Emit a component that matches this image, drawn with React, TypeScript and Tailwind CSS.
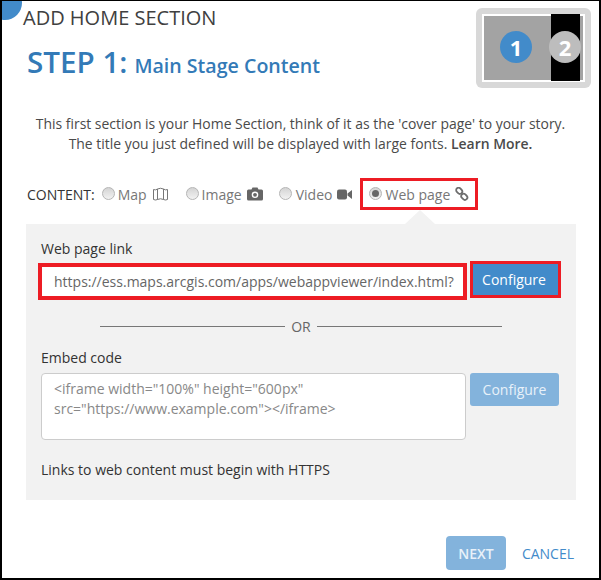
import React from 'react'

const RED = "border-[#ed1c24]"

const Radio = ({ checked }: { checked?: boolean }) => (
  <span className="w-[13px] h-[13px] rounded-full border border-[#b5b5b5] bg-gradient-to-b from-[#d4d4d4] to-[#f2f2f2] flex items-center justify-center shrink-0 -mt-[2px]">
    {checked && <span className="w-[7px] h-[7px] rounded-full bg-[#666]"></span>}
  </span>
)

const MapIcon = () => (
  <svg width="17" height="15" viewBox="0 0 17 15" fill="none" stroke="#777" strokeWidth="1">
    <path d="M1.5 2.5 Q3.5 3.5 5.5 2 Q8.5 0.5 11.5 2 Q13.5 3.5 15.5 2.5 L15.5 12.5 Q13.5 13.5 11.5 12.5 Q8.5 11 5.5 12.5 Q3.5 13.5 1.5 12.5 Z" />
    <path d="M5.5 2 V12.5 M11.5 2 V12.5" />
  </svg>
)

const CameraIcon = () => (
  <svg width="16" height="14" viewBox="0 0 16 14">
    <path fillRule="evenodd" fill="#666" d="M1.5 2.5 H4.5 L5.5 .5 H10.5 L11.5 2.5 H14.5 Q16 2.5 16 4 V12 Q16 13.5 14.5 13.5 H1.5 Q0 13.5 0 12 V4 Q0 2.5 1.5 2.5 Z M8 4.5 A3.3 3.3 0 1 0 8 11.1 A3.3 3.3 0 1 0 8 4.5 Z" />
    <circle cx="8" cy="7.8" r="1.9" fill="#666" />
  </svg>
)

const VideoIcon = () => (
  <svg width="15" height="11" viewBox="0 0 15 11" fill="#666">
    <rect x="0" y="0.5" width="10" height="10" rx="2" />
    <path d="M10.5 4.5 L15 1 V10 L10.5 6.5 Z" />
  </svg>
)

const LinkIcon = () => (
  <svg width="14" height="14" viewBox="0 0 14 14" fill="none" stroke="#6e6e6e" strokeWidth="1.8">
    <rect x="0.9" y="1.4" width="6.6" height="4.8" rx="2.4" transform="rotate(45 4.2 3.8)" />
    <rect x="6" y="7.4" width="6.6" height="4.8" rx="2.4" transform="rotate(45 9.3 9.8)" />
  </svg>
)

const App: React.FC = () => {
  return (
    <div className="relative w-[601px] h-[580px] bg-white overflow-hidden font-['Open_Sans',sans-serif] border-t border-l-2 border-r-2 border-b-2 border-black text-[14px] text-[#333]">
      {/* step badge cut off by the corner */}
      <div className="absolute -left-[14px] -top-[15px] w-[34px] h-[34px] rounded-full bg-[#428bca]"></div>

      <div className="flex justify-between pl-[25px] pr-[8px] pt-[7px] h-[90px]">
        <div>
          <div className="text-[20px] leading-[20px] text-[#404040] -ml-[4px]">ADD HOME SECTION</div>
          <div className="flex items-baseline mt-[14px] text-[#337ab7]">
            <span className="text-[29.6px] leading-[40px] font-semibold mr-[7px]">STEP 1:</span>
            <span className="text-[19.6px] leading-[40px] font-semibold">Main Stage Content</span>
          </div>
        </div>
        <div className="relative w-[115px] h-[80px] bg-[#d8d8d8] rounded-[6px] p-[6px]">
          <div className="relative w-full h-full bg-[#a3a3a3] border-2 border-white">
            <div className="absolute left-[67px] -top-[2px] w-[29px] h-[67px] bg-black"></div>
            <div className="absolute left-[16px] top-[15px] w-[32px] h-[32px] rounded-full bg-[#428bca] text-white font-bold text-[22px] flex items-center justify-center">1</div>
            <div className="absolute left-[65px] top-[15px] w-[32px] h-[32px] rounded-full bg-[#bdbdbd] text-white font-bold text-[22px] flex items-center justify-center">2</div>
          </div>
        </div>
      </div>

      <div className="mt-[23px] text-center text-[13.95px] leading-[20px] text-[#4a4a4a]">
        <p>This first section is your Home Section, think of it as the 'cover page' to your story.</p>
        <p>The title you just defined will be displayed with large fonts. <span className="font-semibold">Learn More.</span></p>
      </div>

      <div className="flex items-center h-[32px] mt-[24px] ml-[25px] text-[#777]">
        <span className="text-[#333] mr-[7px]">CONTENT:</span>
        <span className="flex items-center gap-[3px]"><Radio /><span>Map</span><span className="ml-[2px]"><MapIcon /></span></span>
        <span className="flex items-center gap-[3px] ml-[17px]"><Radio /><span>Image</span><span className="ml-[2px]"><CameraIcon /></span></span>
        <span className="flex items-center gap-[3px] ml-[16px]"><Radio /><span className="ml-[1px]">Video</span><span className="ml-[2px]"><VideoIcon /></span></span>
        <span className={`flex items-center gap-[3px] ml-[8px] h-[32px] pl-[6px] pr-[6px] border-[3px] ${RED}`}><Radio checked /><span>Web page</span><span className="ml-[2px]"><LinkIcon /></span></span>
      </div>

      <div className="relative ml-[24px] mt-[14px] w-[550px] h-[276px] bg-[#f2f2f2] px-[15px] pt-[15px]">
        <div className="absolute left-[379px] -top-[14px] w-0 h-0 border-l-[15px] border-r-[15px] border-b-[14px] border-l-transparent border-r-transparent border-b-[#f2f2f2]"></div>

        <div className="leading-[20px]">Web page link</div>
        <div className="flex gap-[3px] mt-[4px] h-[36px] items-start">
          <div className={`w-[429px] h-[37px] -ml-[3px] bg-white pl-[12px] flex items-center text-[#666] whitespace-nowrap overflow-hidden border-4 ${RED}`}>
            https://ess.maps.arcgis.com/apps/webappviewer/index.html?
          </div>
          <button className={`w-[91px] h-[37px] -mt-[2px] pr-[3px] bg-[#428bca] text-white flex items-center justify-center border-[3px] ${RED}`}>Configure</button>
        </div>

        <div className="flex items-center justify-center gap-[6px] mt-[17px] h-[20px] text-[#666]">
          <span className="w-[185px] h-px bg-[#777]"></span>
          <span>OR</span>
          <span className="w-[185px] h-px bg-[#777]"></span>
        </div>

        <div className="leading-[20px] mt-[12px]">Embed code</div>
        <div className="flex gap-[4px] mt-[5px]">
          <div className="w-[425px] h-[67px] bg-white border border-[#ccc] rounded-[4px] pl-[12px] py-[5px] leading-[20px] text-[#888]">
            &lt;iframe width="100%" height="600px"<br />src="https://www.example.com"&gt;&lt;/iframe&gt;
          </div>
          <button className="w-[89px] h-[33px] rounded-[3px] bg-[#83b3dc] text-[#e8f1f9] flex items-center justify-center">Configure</button>
        </div>

        <div className="leading-[20px] mt-[20px]">Links to web content must begin with HTTPS</div>
      </div>

      <div className="flex items-center justify-end mt-[36px] pr-[25px]">
        <button className="w-[60px] h-[34px] rounded-[4px] bg-[#83b3dc] text-[#e8f1f9] font-semibold text-[14px]">NEXT</button>
        <button className="ml-[16px] text-[#428bca] text-[14px]">CANCEL</button>
      </div>
    </div>
  )
}

export default App
